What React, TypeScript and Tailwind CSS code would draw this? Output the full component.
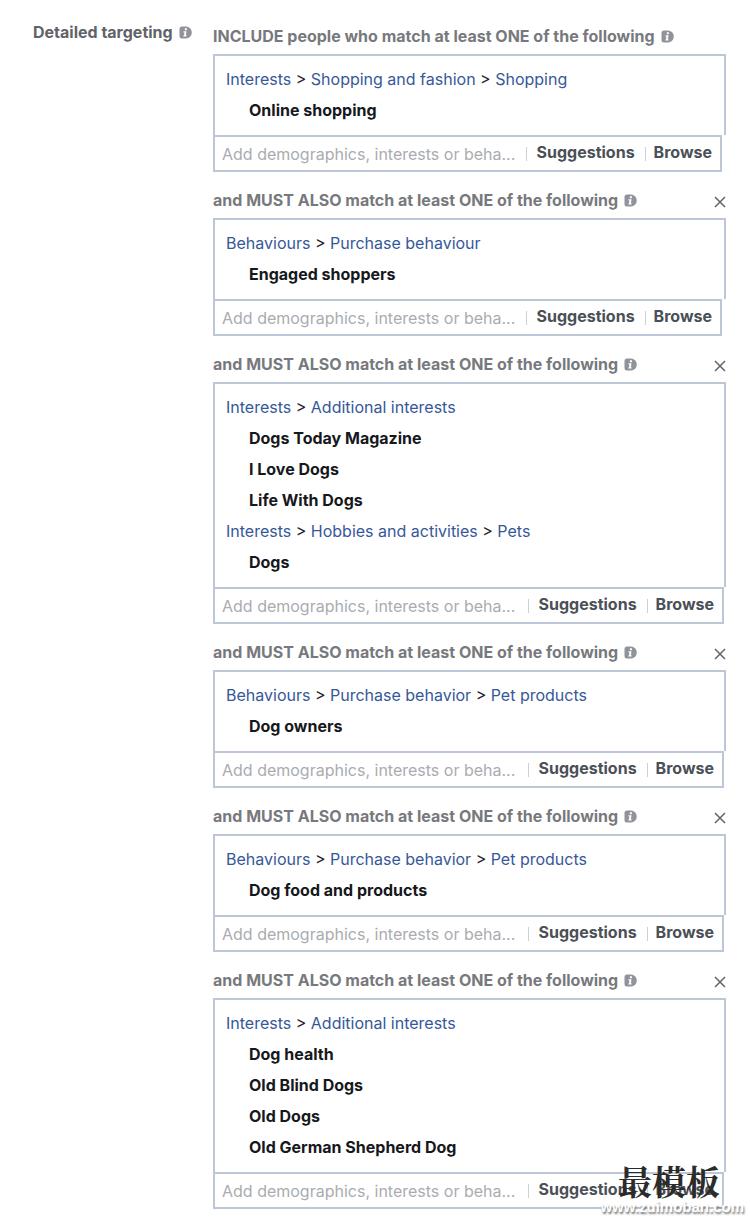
import { useId } from 'react';

type Group = {
  path: string[];
  items: string[];
};

type Block = {
  groups: Group[];
  barClass: string;
};

const BLOCKS: Block[] = [
  {
    groups: [{ path: ['Interests', 'Shopping and fashion', 'Shopping'], items: ['Online shopping'] }],
    barClass: 'mr-1',
  },
  {
    groups: [{ path: ['Behaviours', 'Purchase behaviour'], items: ['Engaged shoppers'] }],
    barClass: 'mr-1',
  },
  {
    groups: [
      { path: ['Interests', 'Additional interests'], items: ['Dogs Today Magazine', 'I Love Dogs', 'Life With Dogs'] },
      { path: ['Interests', 'Hobbies and activities', 'Pets'], items: ['Dogs'] },
    ],
    barClass: 'mr-0.5',
  },
  {
    groups: [{ path: ['Behaviours', 'Purchase behavior', 'Pet products'], items: ['Dog owners'] }],
    barClass: 'mr-0.5',
  },
  {
    groups: [{ path: ['Behaviours', 'Purchase behavior', 'Pet products'], items: ['Dog food and products'] }],
    barClass: 'mr-0.5',
  },
  {
    groups: [
      {
        path: ['Interests', 'Additional interests'],
        items: ['Dog health', 'Old Blind Dogs', 'Old Dogs', 'Old German Shepherd Dog'],
      },
    ],
    barClass: 'mr-0.5',
  },
];

function InfoIcon() {
  return (
    <svg width="13" height="13" viewBox="0 0 13 13" className="shrink-0" aria-hidden="true">
      <path d="M3 0.5H7A5.8 6 0 0 1 7 12.5H3Q0.5 12.5 0.5 10V3Q0.5 0.5 3 0.5Z" fill="#90939b" />
      <path d="M6 2.3H8L7.7 4.2H5.7Z" fill="#fff" />
      <path d="M4.6 5.2H7.5L6.9 9.4H7.8L7.6 10.6H4.2L4.4 9.4H5L5.4 6.4H4.4Z" fill="#fff" />
    </svg>
  );
}

function CloseIcon() {
  return (
    <svg width="12" height="12" viewBox="0 0 12 12" aria-hidden="true">
      <path d="M1 1L11 11M11 1L1 11" stroke="#606369" strokeWidth="1.5" fill="none" />
    </svg>
  );
}

function TargetingBlock({ block, first }: { block: Block; first: boolean }) {
  const id = useId();

  return (
    <section className={first ? '' : 'mt-4'}>
      <div className="flex items-center justify-between pb-1.5">
        <h2 className="flex items-center gap-1.5 font-bold leading-6 text-[#77797d]">
          <label htmlFor={id}>
            {first
              ? 'INCLUDE people who match at least ONE of the following'
              : 'and MUST ALSO match at least ONE of the following'}
          </label>
          <InfoIcon />
        </h2>
        {!first && (
          <button type="button" aria-label="Remove" className="pt-1">
            <CloseIcon />
          </button>
        )}
      </div>

      {/* Selected criteria */}
      <div className="border-2 border-b-0 border-[#bcc6d6] px-[11px] pt-2 pb-[9px]">
        {block.groups.map((group) => (
          <div key={group.path.join('/')}>
            <p className="leading-[31px] text-[#1d2129]">
              {group.path.map((part, i) => (
                <span key={part}>
                  {i > 0 && ' > '}
                  <a href="#" className="text-[#365899]">{part}</a>
                </span>
              ))}
            </p>
            <ul className="pl-[23px]">
              {group.items.map((item) => (
                <li key={item} className="font-bold leading-[31px] text-[#16181c]">{item}</li>
              ))}
            </ul>
          </div>
        ))}
      </div>

      {/* Search bar */}
      <div className={`${block.barClass} flex items-center border-2 border-[#bcc6d6] pl-[7px] pr-2`}>
        <input
          id={id}
          type="text"
          placeholder="Add demographics, interests or beha..."
          className="min-w-0 flex-1 pt-[5px] pb-1 leading-6 outline-none placeholder:text-[#a9acb1]"
        />
        <div className="flex items-center pb-1 font-bold leading-6 text-[#4b4f56]">
          <span className="mt-1 mr-2.5 h-3.5 w-px bg-[#ccd0d8]" />
          <button type="button">Suggestions</button>
          <span className="mt-1 mr-2 ml-2.5 h-3.5 w-px bg-[#ccd0d8]" />
          <button type="button">Browse</button>
        </div>
      </div>
    </section>
  );
}

export default function App() {
  return (
    <div className="relative min-h-screen bg-white font-['Inter',sans-serif] text-[16px]">
      <main className="flex gap-4 pb-3 pr-6">
        <h1 className="flex w-[197px] shrink-0 items-center gap-1.5 self-start pt-5 pl-[33px] font-bold leading-6 text-[#606369]">
          Detailed targeting
          <InfoIcon />
        </h1>
        <div className="min-w-0 flex-1 pt-6">
          {BLOCKS.map((block, i) => (
            <TargetingBlock key={i} block={block} first={i === 0} />
          ))}
        </div>
      </main>

      {/* Watermark */}
      <div className="pointer-events-none absolute right-1.5 bottom-1.5 flex flex-col items-end">
        <span className="mr-6 font-['Noto_Serif_CJK_SC','Noto_Sans_CJK_SC',serif] text-[34px] font-bold leading-9 text-[#2b2b2b]">
          最模板
        </span>
        <span className="font-['Liberation_Sans',sans-serif] text-[15px] font-bold leading-4 text-white [text-shadow:1px_2px_2px_#777]">
          www.zuimoban.com
        </span>
      </div>
    </div>
  );
}
